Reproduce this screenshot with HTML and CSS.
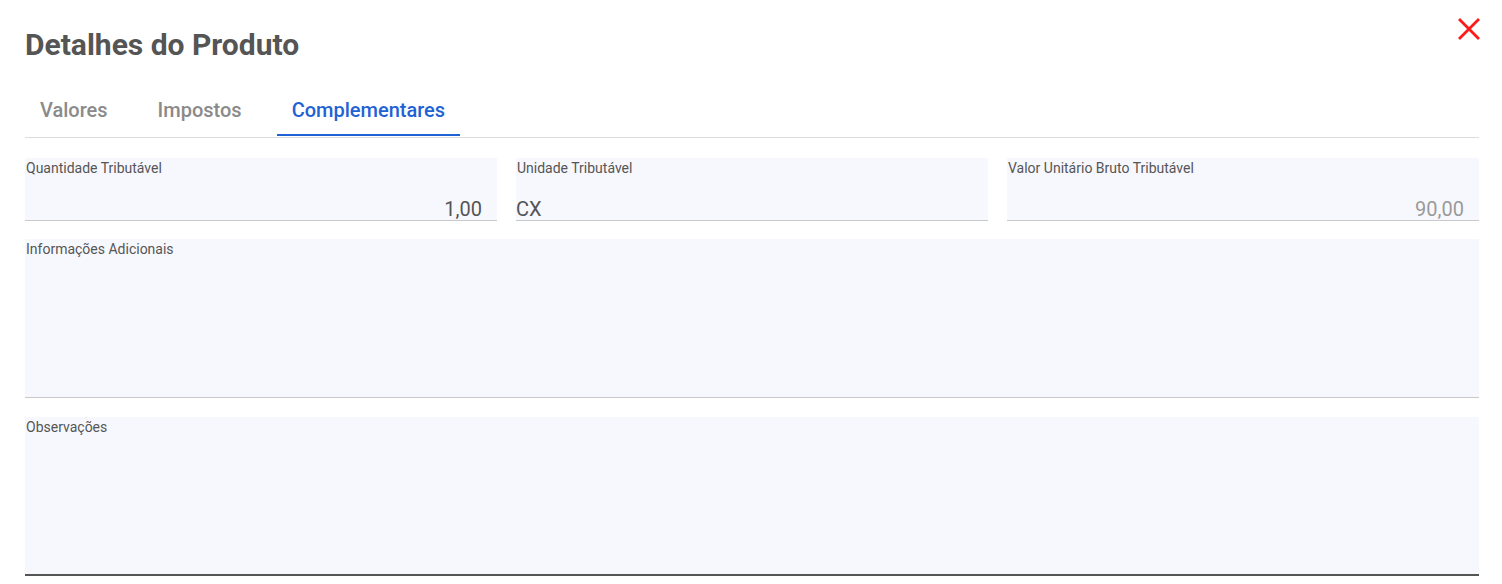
FILE: index.html
```html
<!DOCTYPE html>
<html lang="pt-BR">
<head>
    <meta charset="UTF-8">
    <meta name="viewport" content="width=device-width, initial-scale=1.0">
    <title>Detalhes do Produto</title>
    <link rel="stylesheet" href="styles.css">
</head>
<body>
    <div class="modal">
        <div class="modal-header">
            <h1 class="modal-title">Detalhes do Produto</h1>
            <button class="close-btn" type="button" aria-label="Fechar">
                <svg width="22" height="22" viewBox="0 0 22 22">
                    <path d="M2 2 L20 20 M20 2 L2 20" stroke="#ff1a1a" stroke-width="2.8" stroke-linecap="square" fill="none"/>
                </svg>
            </button>
        </div>

        <!-- abas -->
        <div class="tabs">
            <div class="tab">Valores</div>
            <div class="tab">Impostos</div>
            <div class="tab active">Complementares</div>
        </div>

        <div class="form">
            <div class="row-3">
                <div class="field">
                    <label for="qtdTrib">Quantidade Tributável</label>
                    <input class="num" type="text" id="qtdTrib" value="1,00" readonly>
                </div>
                <div class="field">
                    <label for="unTrib">Unidade Tributável</label>
                    <input class="txt" type="text" id="unTrib" value="CX" readonly>
                </div>
                <div class="field">
                    <label for="vlUnTrib">Valor Unitário Bruto Tributável</label>
                    <input class="num" type="text" id="vlUnTrib" value="90,00" disabled>
                </div>
            </div>

            <div class="field area info">
                <label for="infAdic">Informações Adicionais</label>
                <textarea id="infAdic"></textarea>
            </div>

            <div class="field area obs focused">
                <label for="obs">Observações</label>
                <textarea id="obs"></textarea>
            </div>
        </div>
    </div>
</body>
</html>
```

FILE: styles.css
```css
body {
    margin: 0;
    background-color: #fff;
    font-family: Roboto, "Liberation Sans", Arial, sans-serif;
    color: #555;
}

.modal {
    padding: 18px 23px 0 25px;
}

.modal-header {
    display: flex;
    justify-content: space-between;
    align-items: flex-start;
}

.modal-title {
    margin: 9px 0 0 0;
    font-size: 30px;
    line-height: 36px;
    font-weight: 700;
    color: #555;
}

.close-btn {
    border: none;
    background: none;
    padding: 0;
    margin-right: -1px;
    width: 22px;
    height: 22px;
    cursor: pointer;
}

.close-btn svg {
    display: block;
}

.tabs {
    display: flex;
    gap: 20px;
    margin-top: 22px;
    padding-bottom: 1px;
    border-bottom: 1px solid #dcdcdc;
}

.tab {
    padding: 15px 15px 14px;
    font-size: 20px;
    line-height: 20px;
    font-weight: 500;
    color: #8a8a8a;
    border-bottom: 2px solid transparent;
}

.tab.active {
    color: #1f62d6;
    border-bottom-color: #1f62d6;
}

.form {
    margin-top: 20px;
}

.row-3 {
    display: grid;
    grid-template-columns: 1fr 1fr 1fr;
    gap: 19px;
}

.field {
    display: flex;
    flex-direction: column;
    box-sizing: border-box;
    background-color: #f7f8fe;
    border-bottom: 1px solid #c9c9cc;
    padding: 2px 15px 0 1px;
    height: 63px;
}

.field label {
    font-size: 14px;
    line-height: 16px;
    font-weight: 400;
    color: #555;
}

.field input {
    margin: 22px 0 0 -1px;
    padding: 0;
    border: none;
    outline: none;
    background: transparent;
    font-family: Roboto, "Liberation Sans", Arial, sans-serif;
    font-size: 20px;
    line-height: 22px;
    height: 22px;
    color: #555;
}

.field input.num {
    text-align: right;
}

.field input:disabled {
    color: #9a9a9a;
    -webkit-text-fill-color: #9a9a9a;
    opacity: 1;
}

.field.area {
    height: 159px;
}

.field.info {
    margin-top: 18px;
}

.field.obs {
    margin-top: 19px;
}

.field.focused {
    border-bottom: 2px solid #555;
}

.field textarea {
    flex: 1;
    margin: 4px 0 6px;
    padding: 0;
    border: none;
    outline: none;
    resize: none;
    background: transparent;
    font-family: Roboto, "Liberation Sans", Arial, sans-serif;
    font-size: 16px;
    color: #555;
}
```
